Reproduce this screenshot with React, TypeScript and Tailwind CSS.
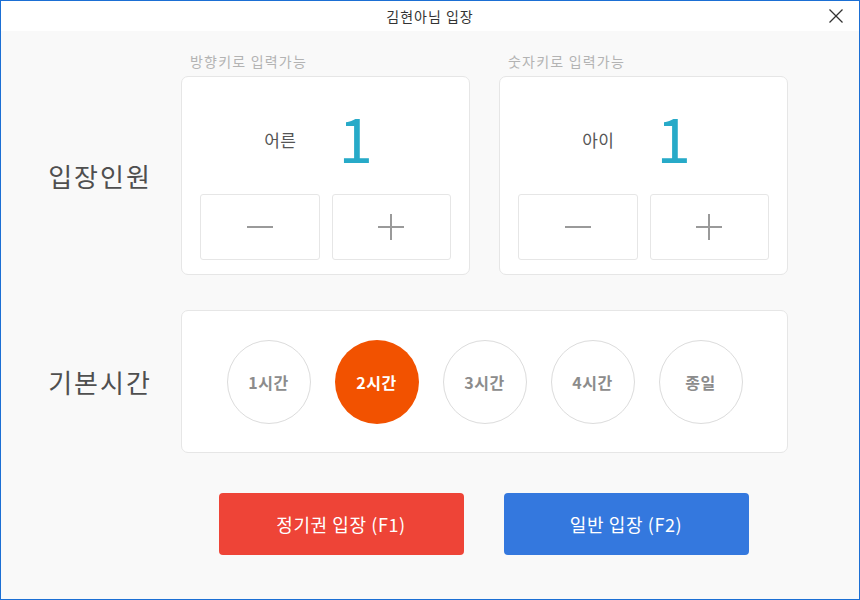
import React from "react";

const font = { fontFamily: '"Noto Sans CJK KR", "Noto Sans", sans-serif' };

function Minus() {
  return (
    <svg width="26" height="26" viewBox="0 0 26 26">
      <line x1="0" y1="13" x2="26" y2="13" stroke="#9a9a9a" strokeWidth="2" />
    </svg>
  );
}
function Plus() {
  return (
    <svg width="26" height="26" viewBox="0 0 26 26">
      <line x1="0" y1="13" x2="26" y2="13" stroke="#9a9a9a" strokeWidth="2" />
      <line x1="13" y1="0" x2="13" y2="26" stroke="#9a9a9a" strokeWidth="2" />
    </svg>
  );
}

function Counter({ label }: { label: string }) {
  return (
    <div className="w-[289px] h-[199px] bg-white border border-[#e6e6e6] rounded-[7px] flex flex-col">
      <div className="h-[117px] flex items-center justify-center gap-[42px] pr-[14px]">
        <span className="text-[17px] leading-none text-[#555555] mt-[8px] tracking-[0.5px]">{label}</span>
        <span className="text-[62px] leading-none text-[#27aac8]">1</span>
      </div>
      <div className="flex gap-[12px] px-[18px]">
        <button className="flex-1 h-[66px] border border-[#e6e6e6] rounded-[3px] bg-white flex items-center justify-center">
          <Minus />
        </button>
        <button className="flex-1 h-[66px] border border-[#e6e6e6] rounded-[3px] bg-white flex items-center justify-center">
          <Plus />
        </button>
      </div>
    </div>
  );
}

export default function App() {
  const times = ["1시간", "2시간", "3시간", "4시간", "종일"];
  return (
    <div style={font} className="w-[860px] h-[600px] border border-[#1b6fd4] bg-[#f9f9f9] flex flex-col">
      <div className="h-[30px] bg-white grid grid-cols-[1fr_auto_1fr] items-center">
        <div />
        <div className="text-[14px] text-[#333333] leading-none tracking-[1px]">김현아님 입장</div>
        <div className="flex justify-end pr-[16px]">
          <svg width="14" height="14" viewBox="0 0 14 14">
            <line x1="0.5" y1="0.5" x2="13.5" y2="13.5" stroke="#333" strokeWidth="1.2" />
            <line x1="13.5" y1="0.5" x2="0.5" y2="13.5" stroke="#333" strokeWidth="1.2" />
          </svg>
        </div>
      </div>

      <div className="grid grid-cols-[180px_607px] pt-[20px]">
        <div />
        <div className="flex gap-[29px] text-[14px] leading-[20px] text-[#b3b3b3] tracking-[1.2px]">
          <div className="w-[289px] pl-[9px]">방향키로 입력가능</div>
          <div className="w-[289px] pl-[9px]">숫자키로 입력가능</div>
        </div>
      </div>

      <div className="grid grid-cols-[180px_607px] mt-[5px] items-center">
        <div className="text-[26px] text-[#4f4f4f] text-center pl-[18px] tracking-[2px]">입장인원</div>
        <div className="flex gap-[29px]">
          <Counter label="어른" />
          <Counter label="아이" />
        </div>
      </div>

      <div className="grid grid-cols-[180px_607px] mt-[35px] items-center">
        <div className="text-[26px] text-[#4f4f4f] text-center pl-[18px] tracking-[2px]">기본시간</div>
        <div className="h-[143px] bg-white border border-[#e6e6e6] rounded-[7px] flex items-center justify-center gap-[24px]">
          {times.map((t, i) => (
            <div
              key={t}
              className={
                i === 1
                  ? "w-[84px] h-[84px] rounded-full bg-[#f25200] flex items-center justify-center text-[16px] font-bold text-white tracking-[0.5px]"
                  : "w-[84px] h-[84px] rounded-full border border-[#dcdcdc] bg-white flex items-center justify-center text-[16px] font-bold text-[#8c8c8c] tracking-[0.5px]"
              }
            >
              {t}
            </div>
          ))}
        </div>
      </div>

      <div className="grid grid-cols-[180px_607px] mt-[40px]">
        <div />
        <div className="flex justify-center gap-[40px] pr-[2px]">
          <button className="w-[245px] h-[62px] rounded-[4px] bg-[#ee4437] text-white text-[18px] tracking-[0.6px]">정기권 입장 (F1)</button>
          <button className="w-[245px] h-[62px] rounded-[4px] bg-[#3478de] text-white text-[18px] tracking-[0.6px]">일반 입장 (F2)</button>
        </div>
      </div>
    </div>
  );
}
